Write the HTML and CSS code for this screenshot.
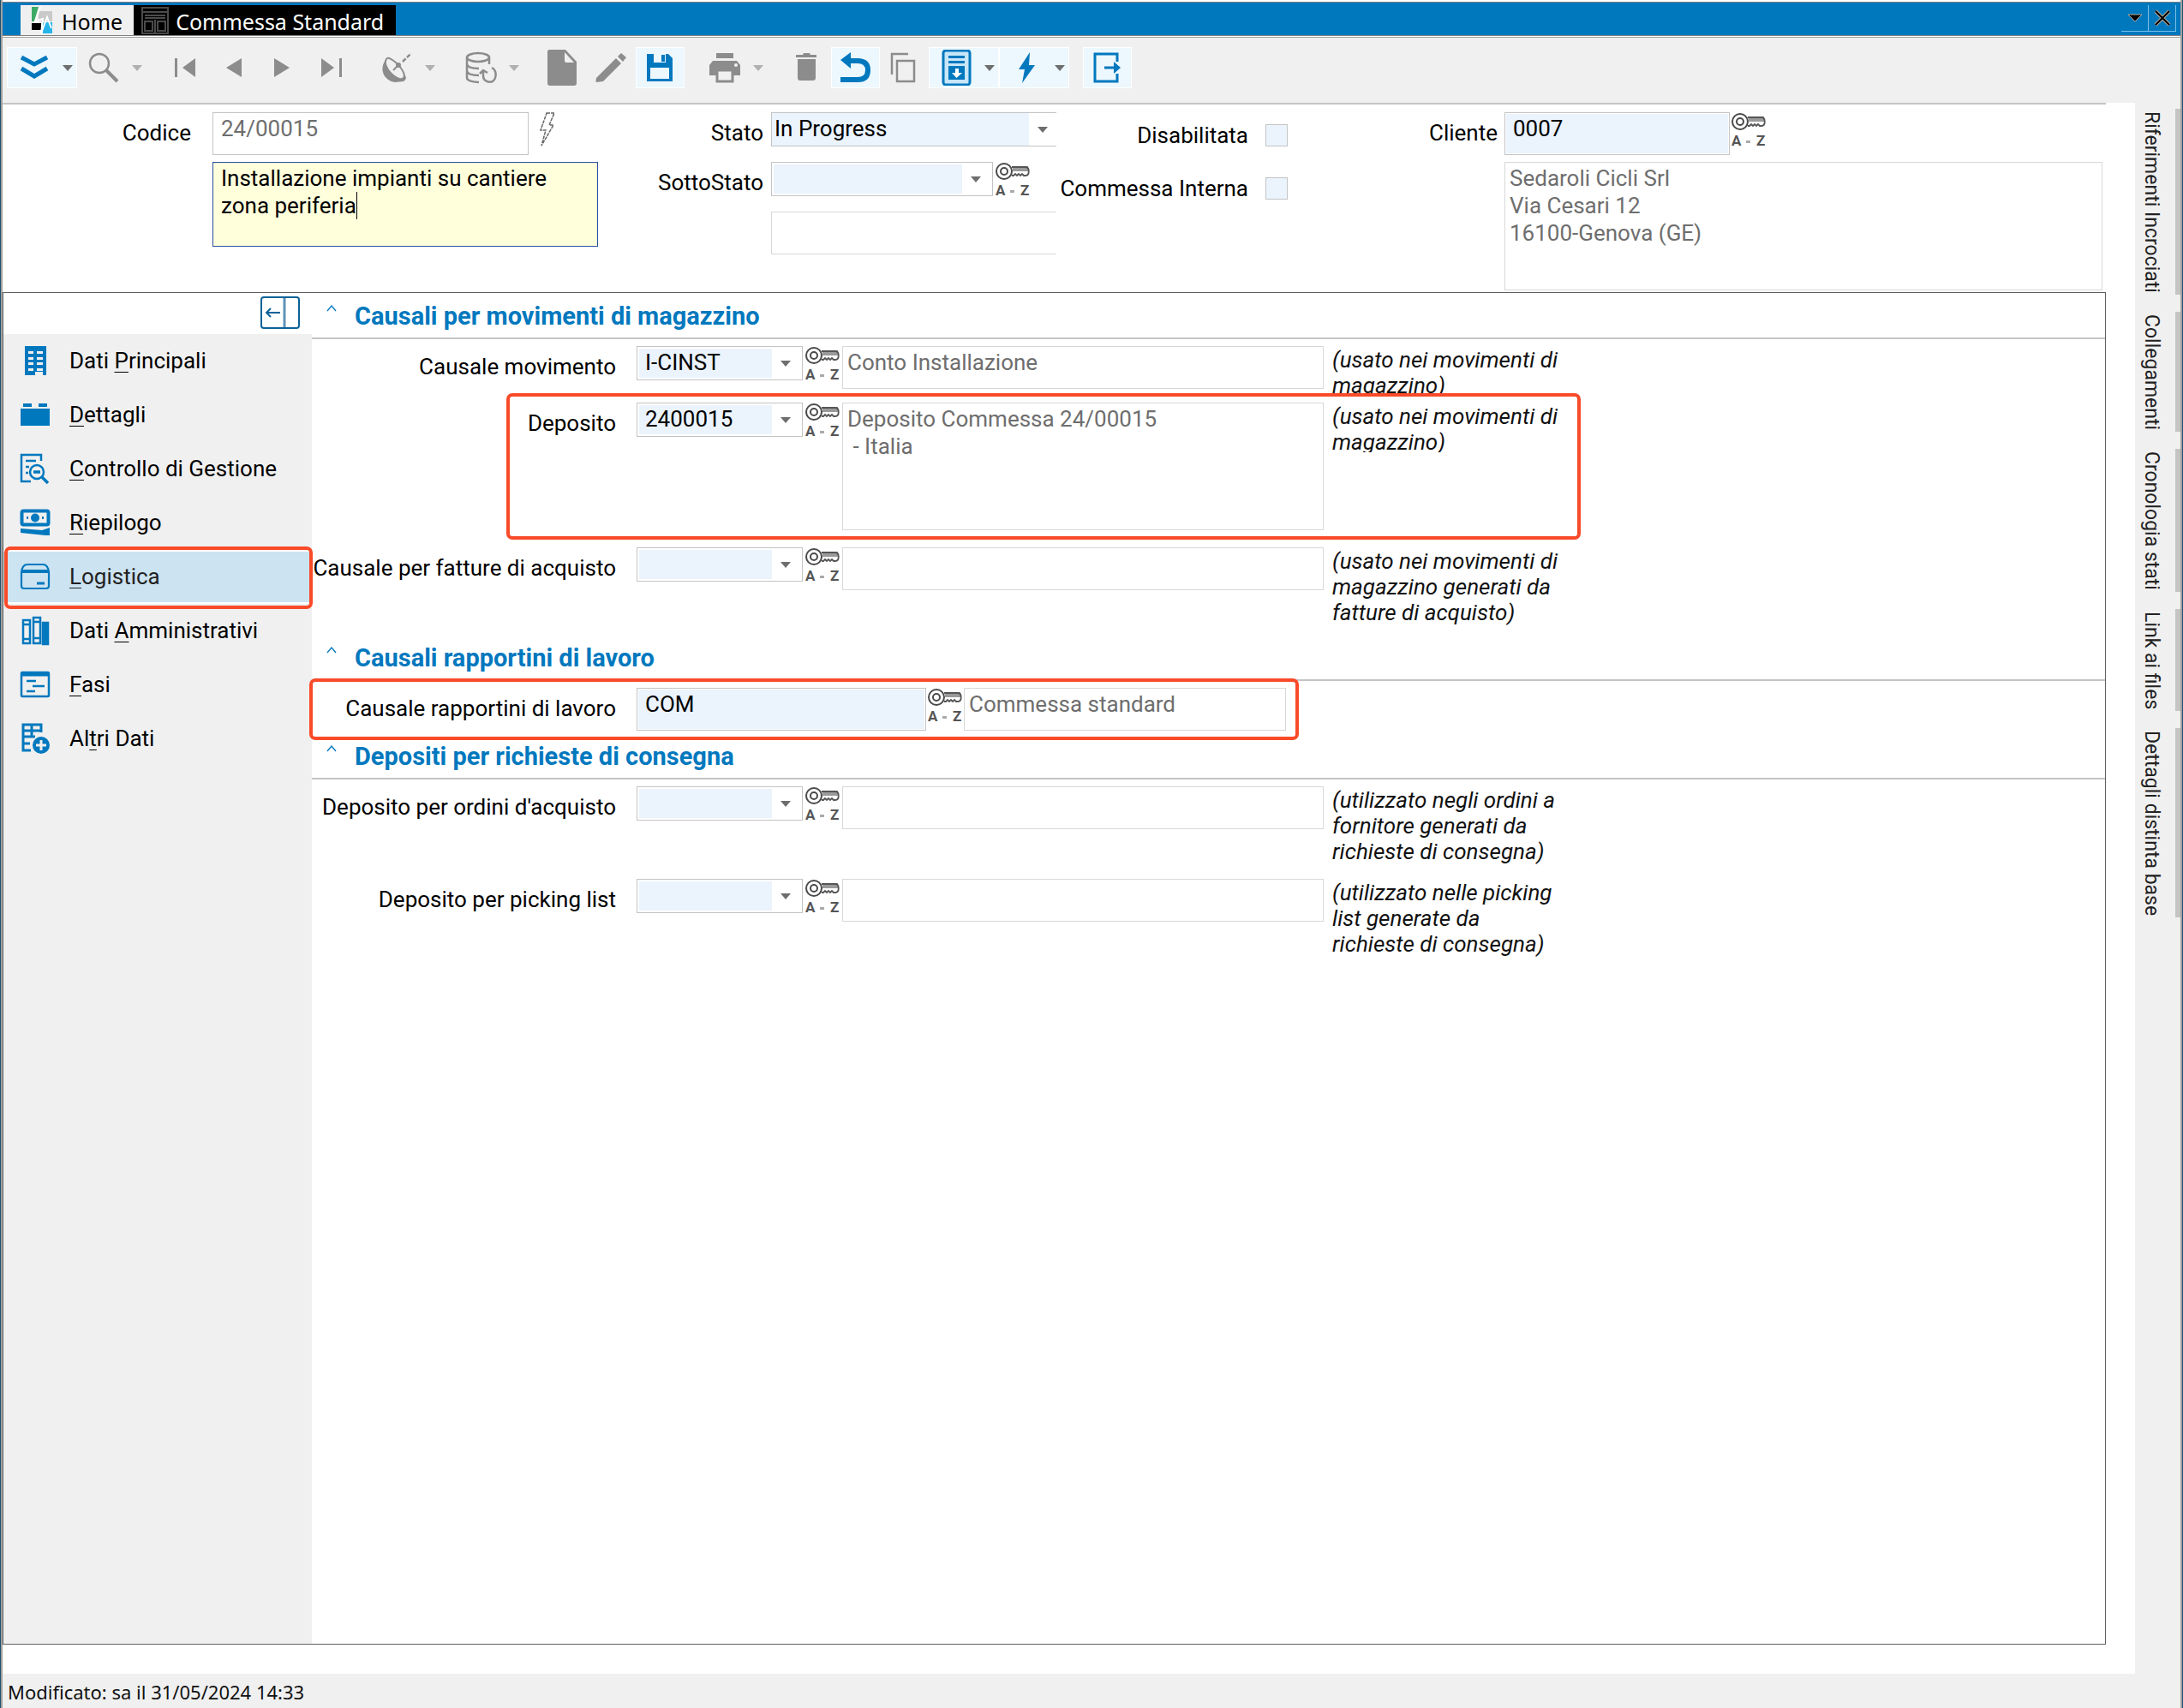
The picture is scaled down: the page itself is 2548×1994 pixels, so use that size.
FILE: index.html
```html
<!DOCTYPE html>
<html lang="it">
<head>
<meta charset="utf-8">
<title>Commessa Standard</title>
<meta name="viewport" content="width=device-width, initial-scale=1">
<link rel="stylesheet" href="styles.css">
</head>
<body>
<svg class="defs" aria-hidden="true">
  <symbol id="key" viewBox="0 0 42 40">
    <rect x="21" y="5" width="18" height="6" fill="#9a9a9a"/>
    <path d="M20 6H36C41 6 41 16 36 16H34L32 14L30 16L28 14L26 16L24 14L22 16H20" fill="none" stroke="#555" stroke-width="1.800"/>
    <circle cx="11" cy="11" r="9" fill="#fff" stroke="#4a4a4a" stroke-width="2"/>
    <circle cx="11" cy="11" r="4" fill="none" stroke="#4a4a4a" stroke-width="2"/>
    <text x="1" y="39" class="key-text">A</text><rect x="18" y="33" width="5" height="3" fill="#aaa"/><text x="30" y="39" class="key-text">Z</text>
  </symbol>
  <symbol id="arrow" viewBox="0 0 12 7"><path d="M0 0H12L6 7Z" fill="currentColor"/></symbol>
  <symbol id="up" viewBox="0 0 12 8"><path d="M1 7L6 1L11 7" fill="none" stroke="currentColor" stroke-width="1.3"/></symbol>
</svg>
<div class="window">
  <header class="titlebar">
    <nav class="tabs">
      <button class="tab" type="button">
        <svg class="tab-icon" viewBox="0 0 32 32"><path d="M5 0H13L8 17H5Z" fill="#3dab68"/><path d="M13 5H29V17H13Z" fill="#c9c9c9"/><path d="M5 19H16V27H5Z"/><path d="M18 18H29V31H18Z" fill="#26b5e8"/><path d="M15 0L9 17L18 14L16 31L23 12L28 25" fill="none" stroke="#fff" stroke-width="2"/></svg>
        <span>Home</span>
      </button>
      <button class="tab tab--active" type="button">
        <svg class="tab-icon" viewBox="0 0 32 32" fill="none" stroke="#4b4b4b" stroke-width="2"><path d="M1 1H31V31H1ZM1 6H31M4 10H28M4 13H28M4 17H13V28H4ZM19 17H28V28H19ZM16 15V30"/></svg>
        <span>Commessa Standard</span>
      </button>
    </nav>
    <div class="window-buttons">
      <button type="button" aria-label="Elenco schede"><svg width="18" height="10" viewBox="0 0 18 10"><path d="M1 1H17L9 9Z" stroke="#b9a994"/></svg></button>
      <button type="button" aria-label="Chiudi"><svg width="20" height="20" viewBox="0 0 20 20"><path d="M2 2L18 18M18 2L2 18" stroke="#b9a994" stroke-width="4"/><path d="M2 2L18 18M18 2L2 18" stroke="#000" stroke-width="2"/></svg></button>
    </div>
  </header>

  <div class="toolbar" role="toolbar" aria-label="Comandi">
    <div class="tool-group">
      <button class="tool tool--split is-on" type="button" aria-label="Espandi"><svg class="ico" viewBox="0 0 42 42" fill="none" stroke="currentColor" stroke-width="5"><path d="M6 9L21 17L36 9M6 22L21 31L36 22"/></svg><svg class="arr"><use href="#arrow"/></svg></button>
      <button class="tool tool--split" type="button" aria-label="Cerca"><svg class="ico" viewBox="0 0 42 42" fill="none" stroke="currentColor"><circle cx="16" cy="16" r="11" stroke-width="2.5"/><path d="M24 24L37 37" stroke-width="4"/></svg><svg class="arr"><use href="#arrow"/></svg></button>
    </div>
    <div class="tool-group">
      <button class="tool" type="button" aria-label="Primo"><svg class="ico" viewBox="0 0 42 42" fill="currentColor"><path d="M9 10H12V32H9ZM33 10V32L18 21Z"/></svg></button>
      <button class="tool" type="button" aria-label="Precedente"><svg class="ico" viewBox="0 0 42 42" fill="currentColor"><path d="M30 10V32L12 21Z"/></svg></button>
      <button class="tool" type="button" aria-label="Successivo"><svg class="ico" viewBox="0 0 42 42" fill="currentColor"><path d="M11 10V32L29 21Z"/></svg></button>
      <button class="tool" type="button" aria-label="Ultimo"><svg class="ico" viewBox="0 0 42 42" fill="currentColor"><path d="M30 10H33V32H30ZM9 10V32L24 21Z"/></svg></button>
    </div>
    <div class="tool-group">
      <button class="tool tool--split" type="button" aria-label="Radar"><svg class="ico" viewBox="0 0 42 42"><path d="M9 11C0 21 5 36 19 38L29 37C34 34 32 30 28 28Z" fill="currentColor"/><path d="M9 11C12 5 34 25 29 33C23 39 3 20 9 11Z" fill="#f0f0f0" stroke="currentColor" stroke-width="2"/><path d="M17 24L24 17" stroke="currentColor" stroke-width="2"/><circle cx="23" cy="18" r="3" fill="currentColor"/><path d="M28 14L38 4" stroke="currentColor" stroke-width="2.5" stroke-dasharray="5 2"/></svg><svg class="arr"><use href="#arrow"/></svg></button>
    </div>
    <div class="tool-group">
      <button class="tool tool--split" type="button" aria-label="Aggiorna dati"><svg class="ico" viewBox="0 0 42 42" fill="none" stroke="currentColor" stroke-width="2.5"><ellipse cx="18" cy="9" rx="13" ry="5"/><path d="M5 9V33C5 36 12 38 19 38M31 9V17M5 17C6 21 13 22 19 22M5 25C6 29 13 30 19 30"/><path d="M34 21C40 24 40 33 35 37C30 39 24 36 24 31V25M20 28L24 24L29 27"/></svg><svg class="arr"><use href="#arrow"/></svg></button>
    </div>
    <div class="tool-group">
      <button class="tool" type="button" aria-label="Nuovo"><svg class="ico" viewBox="0 0 42 42"><path d="M6 0H25L38 14V39Q38 42 35 42H7Q4 42 4 39V3Q4 0 6 0Z" fill="currentColor"/><path d="M24 3L35 15H26Q24 15 24 13Z" fill="#f0f0f0"/></svg></button>
      <button class="tool" type="button" aria-label="Modifica"><svg class="ico" viewBox="0 0 42 42" fill="currentColor"><path d="M27 10L33 16L12 37L4 38Q3 38 4 33ZM29 8L33 4L39 9L35 14Z"/></svg></button>
      <button class="tool is-on" type="button" aria-label="Salva"><svg class="ico" viewBox="0 0 42 42"><path d="M6 5H31L36 10V37H6Z" fill="currentColor"/><path d="M14 5H28V15H14ZM10 21H32V34H10Z" fill="#ecf7fe"/><path d="M23 6H27V14H23Z" fill="currentColor"/></svg></button>
    </div>
    <div class="tool-group">
      <button class="tool tool--split" type="button" aria-label="Stampa"><svg class="ico" viewBox="0 0 42 42"><path d="M11 4H31V10H11ZM7 13H35L39 18V30H3V18Z" fill="currentColor"/><circle cx="34" cy="18" r="2" fill="#f0f0f0"/><path d="M12 24H30V37H12Z" fill="#f0f0f0" stroke="currentColor" stroke-width="3"/></svg><svg class="arr"><use href="#arrow"/></svg></button>
    </div>
    <div class="tool-group">
      <button class="tool" type="button" aria-label="Elimina"><svg class="ico" viewBox="0 0 42 42" fill="currentColor"><path d="M9 6H17L18 4H25L26 6H33V9H9ZM11 11H32V33Q32 36 29 36H14Q11 36 11 33Z"/></svg></button>
      <button class="tool is-on" type="button" aria-label="Annulla"><svg class="ico" viewBox="0 0 42 42"><path d="M14 13H24Q36 13 36 24Q36 35 24 35H4" fill="none" stroke="currentColor" stroke-width="6"/><path d="M4 12L16 3V22Z" fill="currentColor"/></svg></button>
      <button class="tool" type="button" aria-label="Copia"><svg class="ico" viewBox="0 0 42 42" fill="none" stroke="currentColor" stroke-width="2.5"><path d="M13 13H33V37H13ZM7 29V5H26"/></svg></button>
      <button class="tool tool--split is-on" type="button" aria-label="Archivia"><svg class="ico" viewBox="0 0 42 42"><rect x="6" y="1" width="31" height="40" rx="3" fill="#c7e6f8" stroke="currentColor" stroke-width="3"/><path d="M12 7H31V10H12ZM12 13H31V16H12ZM12 19H31V35H12Z" fill="currentColor"/><path d="M20 22H24V27H28L21.500 33L16 27H20Z" fill="#fff"/></svg><svg class="arr"><use href="#arrow"/></svg></button>
      <button class="tool tool--split is-on" type="button" aria-label="Azioni"><svg class="ico" viewBox="0 0 42 42" fill="currentColor"><path d="M25 3L12 23H19L16 39L31 18H24Z"/></svg><svg class="arr"><use href="#arrow"/></svg></button>
    </div>
    <div class="tool-group">
      <button class="tool is-on" type="button" aria-label="Esci"><svg class="ico" viewBox="0 0 42 42" fill="none" stroke="currentColor" stroke-width="3"><path d="M33 14V5H7V37H33V28M18 21H33"/><path d="M29 14L37 21L29 28Z" fill="currentColor" stroke="none"/></svg></button>
    </div>
  </div>

  <div class="workspace">
    <main class="main">
      <form class="head">
        <div class="head-group head-group--code">
          <label class="label" for="codice">Codice</label>
          <div class="line">
            <input class="input" id="codice" value="24/00015" readonly>
            <svg class="auto" viewBox="0 0 20 40"><path d="M9 1H18L12 15H17L3 39L8 21H2Z" fill="none" stroke="#666" stroke-width="1.500" stroke-dasharray="4 1"/></svg>
          </div>
          <div class="descr">
            <textarea class="input input--edit" aria-label="Descrizione">Installazione impianti su cantiere
zona periferia</textarea>
            <span class="caret"></span>
          </div>
        </div>

        <div class="head-group head-group--state">
          <label class="label" for="stato">Stato</label>
          <div class="combo combo--open">
            <select id="stato"><option>In Progress</option></select>
            <svg class="arr"><use href="#arrow"/></svg>
          </div>
          <label class="label" for="sotto">SottoStato</label>
          <div class="line line--sub">
            <div class="combo combo--sub">
              <select id="sotto"><option></option></select>
              <svg class="arr"><use href="#arrow"/></svg>
            </div>
            <button class="key" type="button" aria-label="Cerca sottostato"><svg><use href="#key"/></svg></button>
          </div>
          <input class="input input--soft input--cut" aria-label="Descrizione sottostato" readonly>
        </div>

        <div class="head-group head-group--flags">
          <label class="flag-label" for="dis">Disabilitata</label><input class="check" id="dis" type="checkbox">
          <label class="flag-label" for="int">Commessa Interna</label><input class="check" id="int" type="checkbox">
        </div>

        <div class="head-group head-group--client">
          <label class="label" for="cliente">Cliente</label>
          <div class="line line--client">
            <input class="input input--fill" id="cliente" value="0007">
            <button class="key" type="button" aria-label="Cerca cliente"><svg><use href="#key"/></svg></button>
          </div>
          <textarea class="input input--soft input--address" aria-label="Indirizzo" readonly>Sedaroli Cicli Srl
Via Cesari 12
16100-Genova (GE)</textarea>
        </div>
      </form>

      <div class="panel">
        <aside class="side">
          <div class="side-top">
            <button class="collapse" type="button" aria-label="Riduci menu"><svg width="46" height="38" viewBox="0 0 46 38" fill="none" stroke="#0b6298" stroke-width="2"><rect x="1" y="1" width="44" height="36" rx="3"/><path d="M28 2V36" stroke="#5f93b8" stroke-width="3"/><path d="M7 19H23M12 14L7 19L12 24"/></svg></button>
          </div>
          <nav class="menu">
            <a class="menu-item" href="#"><svg viewBox="0 0 36 36"><path d="M6 1H31V35H27V31H18V35H6Z" fill="#0078be"/><path d="M10 7H16V10H10ZM20 7H27V10H20ZM10 14H16V17H10ZM20 14H27V17H20ZM10 20H16V23H10ZM20 20H27V23H20ZM10 27H16V30H10ZM20 27H27V30H20Z" fill="#f0f0f0"/></svg><span>Dati <u>P</u>rincipali</span></a>
            <a class="menu-item" href="#"><svg viewBox="0 0 36 36" fill="#0078be"><path d="M1 11H35V31H1ZM4 5H14V9H4ZM22 5H32V9H22Z"/></svg><span><u>D</u>ettagli</span></a>
            <a class="menu-item" href="#"><svg viewBox="0 0 36 36" fill="none" stroke="#0078be" stroke-width="2.5"><path d="M13 33H2V2H25V9M7 9H19M7 16H11M7 23H10"/><circle cx="20" cy="22" r="8"/><path d="M26 28L33 35M16 22H24" stroke-width="3.500"/></svg><span><u>C</u>ontrollo di Gestione</span></a>
            <a class="menu-item" href="#"><svg viewBox="0 0 36 36"><rect x="2.500" y="4.500" width="31" height="16" rx="2" fill="#f0f0f0" stroke="#0078be" stroke-width="4"/><ellipse cx="18" cy="12.500" rx="5" ry="5" fill="#0078be"/><path d="M8 11H10V14H8ZM26 11H28V14H26ZM1 25L26 27L35 24V33H30L1 30Z" fill="#0078be"/></svg><span><u>R</u>iepilogo</span></a>
            <a class="menu-item menu-item--current" href="#" aria-current="page"><svg viewBox="0 0 36 36" fill="none" stroke="#0078be" stroke-width="2.2"><path d="M2 13Q3 4 9 4H27Q33 4 34 13V29Q34 32 31 32H5Q2 32 2 29Z"/><path d="M2 12H34" stroke-width="4"/><path d="M20 26H29" stroke-width="3"/></svg><span><u>L</u>ogistica</span></a>
            <a class="menu-item" href="#"><svg viewBox="0 0 36 36" fill="none" stroke="#0078be" stroke-width="2.5"><path d="M4 6H12V33H4ZM4 11H12M4 28H12M16 3H24V33H16ZM16 8H24M16 27H24"/><path d="M27 9H33V34H27ZM27 14H33" fill="#0078be"/></svg><span>Dati <u>A</u>mministrativi</span></a>
            <a class="menu-item" href="#"><svg viewBox="0 0 36 36" fill="none" stroke="#0078be" stroke-width="2.5"><rect x="2" y="4" width="32" height="28" rx="1"/><path d="M2 6H34" stroke-width="5"/><path d="M8 14H19M15 20H29M8 26H18"/></svg><span><u>F</u>asi</span></a>
            <a class="menu-item" href="#"><svg viewBox="0 0 36 36" fill="none" stroke="#0078be" stroke-width="3"><path d="M13 32H4V2H25V11M4 9H25M14 2V17M4 16H18M4 24H12"/><circle cx="25" cy="26" r="10" fill="#0078be" stroke="none"/><path d="M25 20V32M19 26H31" stroke="#f0f0f0"/></svg><span>Al<u>t</u>ri Dati</span></a>
          </nav>
        </aside>

        <div class="content">
          <section>
            <h2 class="section-title"><button type="button"><svg><use href="#up"/></svg><span>Causali per movimenti di magazzino</span></button></h2>
            <div class="rows">
              <div class="row row--short">
                <label class="label" for="f1">Causale movimento</label>
                <div class="combo"><select id="f1"><option>I-CINST</option></select><svg class="arr"><use href="#arrow"/></svg></div>
                <button class="key" type="button" aria-label="Cerca causale"><svg><use href="#key"/></svg></button>
                <input class="input input--soft" value="Conto Installazione" aria-label="Descrizione causale" readonly>
                <p class="note note--cut">(usato nei movimenti di magazzino)</p>
              </div>
              <div class="row row--tall">
                <label class="label" for="f2">Deposito</label>
                <div class="combo"><select id="f2"><option>2400015</option></select><svg class="arr"><use href="#arrow"/></svg></div>
                <button class="key" type="button" aria-label="Cerca deposito"><svg><use href="#key"/></svg></button>
                <textarea class="input input--soft" aria-label="Descrizione deposito" readonly>Deposito Commessa 24/00015
 - Italia</textarea>
                <p class="note note--cut">(usato nei movimenti di magazzino)</p>
                <span class="mark mark--store"></span>
              </div>
              <div class="row row--note">
                <label class="label" for="f3">Causale per fatture di acquisto</label>
                <div class="combo"><select id="f3"><option></option></select><svg class="arr"><use href="#arrow"/></svg></div>
                <button class="key" type="button" aria-label="Cerca causale fatture"><svg><use href="#key"/></svg></button>
                <input class="input input--soft" aria-label="Descrizione causale fatture" readonly>
                <p class="note">(usato nei movimenti di magazzino generati da fatture di acquisto)</p>
              </div>
            </div>
          </section>
          <section>
            <h2 class="section-title"><button type="button"><svg><use href="#up"/></svg><span>Causali rapportini di lavoro</span></button></h2>
            <div class="rows">
              <div class="row row--report">
                <label class="label" for="f4">Causale rapportini di lavoro</label>
                <input class="input input--fill" id="f4" value="COM">
                <button class="key" type="button" aria-label="Cerca causale rapportini"><svg><use href="#key"/></svg></button>
                <input class="input input--soft" value="Commessa standard" aria-label="Descrizione causale rapportini" readonly>
                <span class="mark mark--report"></span>
              </div>
            </div>
          </section>
          <section>
            <h2 class="section-title"><button type="button"><svg><use href="#up"/></svg><span>Depositi per richieste di consegna</span></button></h2>
            <div class="rows">
              <div class="row">
                <label class="label" for="f5">Deposito per ordini d'acquisto</label>
                <div class="combo"><select id="f5"><option></option></select><svg class="arr"><use href="#arrow"/></svg></div>
                <button class="key" type="button" aria-label="Cerca deposito ordini"><svg><use href="#key"/></svg></button>
                <input class="input input--soft" aria-label="Descrizione deposito ordini" readonly>
                <p class="note">(utilizzato negli ordini a fornitore generati da richieste di consegna)</p>
              </div>
              <div class="row">
                <label class="label" for="f6">Deposito per picking list</label>
                <div class="combo"><select id="f6"><option></option></select><svg class="arr"><use href="#arrow"/></svg></div>
                <button class="key" type="button" aria-label="Cerca deposito picking"><svg><use href="#key"/></svg></button>
                <input class="input input--soft" aria-label="Descrizione deposito picking" readonly>
                <p class="note">(utilizzato nelle picking list generate da richieste di consegna)</p>
              </div>
            </div>
          </section>
        </div>
      </div>
    </main>
    <nav class="docks" aria-label="Pannelli">
      <button type="button">Riferimenti Incrociati</button>
      <button type="button">Collegamenti</button>
      <button type="button">Cronologia stati</button>
      <button type="button">Link ai files</button>
      <button type="button">Dettagli distinta base</button>
    </nav>
  </div>
  <footer class="status">Modificato: sa il 31/05/2024 14:33</footer>
</div>
</body>
</html>
```

FILE: styles.css
```css
:root {
  --blue: #0078be;
  --face: #f0f0f0;
  --field: #ebf3fc;
  --line: #c4c4c4;
  --soft: #d8d8d8;
  --red: #f94a29;
}

* { box-sizing: border-box; }

body {
  margin: 0;
  background: #fff;
  color: #000;
  font: 26px/32px Roboto, sans-serif;
}

button, input, select, textarea { font: inherit; color: inherit; margin: 0; }
button { padding: 0; border: 0; background: none; }
svg { display: block; flex: none; }
.defs { display: none; }

.window {
  display: flex;
  flex-direction: column;
  min-height: 100vh;
  padding: 2px 2px 0;
  border: solid #1f5373;
  border-width: 0 1px;
  background: linear-gradient(90deg, #a0a0a0 2px, #fff 2px, #fff calc(100% - 2px), #a0a0a0 calc(100% - 2px));
}

/* Title bar */
.titlebar {
  display: flex;
  justify-content: space-between;
  height: 40px;
  padding: 3px 5px 0 21px;
  border: solid #808080;
  border-width: 1px 0;
  background: var(--blue);
  font: 25px/38px "Noto Sans", sans-serif;
}
.tabs { display: flex; }
.tab { display: flex; gap: 8px; height: 35px; padding: 0 13px 0 8px; background: var(--face); }
.tab--active { padding: 0 14px 0 9px; background: #000; color: #fff; }
.tab-icon { width: 32px; height: 32px; margin-top: 2px; }
.window-buttons { display: flex; margin-bottom: 4px; border-bottom: 1px solid #7cc0ea; }
.window-buttons button { display: grid; place-items: center; width: 32px; border-right: 1px solid #7cc0ea; }

/* Toolbar */
.toolbar {
  display: flex;
  gap: 16px;
  height: 77px;
  margin-top: 1px;
  padding: 11px 5px 0;
  border-top: 1px solid #a0a0a0;
  background: var(--face);
}
.tool-group { display: flex; }
.tool { display: flex; align-items: center; width: 57px; height: 48px; padding-left: 7px; color: #8c8c8c; }
.tool--split { gap: 12px; width: 82px; padding-left: 10px; }
.tool.is-on { padding-left: 6px; border: 1px solid #fff; background: #ecf7fe; color: var(--blue); }
.tool--split.is-on { padding-left: 10px; }
.ico { width: 42px; height: 42px; }
.arr { width: 12px; height: 7px; color: #6e6e6e; }
.tool .arr { color: #b0b0b0; }
.tool.is-on .arr { color: #6e6e6e; }

/* Workspace */
.workspace { display: flex; flex: 1; }
.main {
  display: flex;
  flex: 1;
  flex-direction: column;
  min-width: 0;
  margin: 0 34px 34px 0;
  border-top: 2px solid var(--line);
}

/* Fields */
.label { padding-top: 8px; text-align: right; white-space: nowrap; }
.line { display: flex; }
.input {
  display: block;
  min-width: 0;
  height: 50px;
  padding: 2px 9px 14px;
  border: 1px solid var(--line);
  border-radius: 0;
  background: #fff;
  color: #6e6e6e;
  outline: 0;
  resize: none;
}
textarea.input { padding-bottom: 0; overflow: hidden; }
.input--soft { padding-left: 5px; border-color: var(--soft); }
.input--fill { background: var(--field); box-shadow: inset 0 0 0 1px #fff; color: #000; }
.input--edit { width: 450px; height: 99px; border-color: #2850a0; background: #ffffdc; color: #000; }

.combo { display: grid; flex: none; align-items: center; width: 194px; height: 40px; }
.combo select {
  grid-area: 1 / 1;
  width: 100%;
  height: 100%;
  padding: 0 40px 2px 9px;
  border: 1px solid var(--line);
  border-radius: 0;
  background: linear-gradient(var(--field), var(--field)) 2px 2px / calc(100% - 37px) calc(100% - 4px) no-repeat #fff;
  color: #000;
  appearance: none;
}
.combo .arr { grid-area: 1 / 1; justify-self: end; margin-right: 14px; pointer-events: none; }

.key { flex: none; width: 42px; height: 40px; }
.key svg { width: 42px; height: 40px; }
.key-text { font: bold 17px Roboto, sans-serif; fill: #555; }

/* Header form */
.head { display: flex; height: 219px; padding: 9px 4px 0 0; }
.head-group { display: grid; align-content: start; row-gap: 8px; }
.head-group--code { grid-template-columns: 220px 452px; column-gap: 25px; }
.head-group--code .input:not(.input--edit) { width: 369px; }
.auto { width: 20px; height: 40px; margin-left: 12px; }
.descr { position: relative; grid-column: 2; }
.caret { position: absolute; top: 35px; left: 168px; width: 1px; height: 32px; background: #000; }

.head-group--state { grid-template-columns: 191px 333px; column-gap: 9px; row-gap: 18px; }
.combo--open { width: 333px; }
.combo--open select { padding-left: 3px; border-right: 0; background-position: 0 0; background-size: calc(100% - 32px) 100%; }
.combo--open .arr { margin-right: 10px; }
.combo--sub { width: 259px; }
.line--sub { gap: 2px; }
.input--cut { grid-column: 2; border-right: 0; }

.head-group--flags { grid-template-columns: 224px 26px; column-gap: 20px; row-gap: 30px; padding-top: 11px; }
.flag-label { height: 32px; text-align: right; white-space: nowrap; }
.check { width: 26px; height: 26px; margin: 3px 0; border: 1px solid var(--line); background: var(--field); appearance: none; }

.head-group--client { flex: 1; grid-template-columns: 245px 1fr; column-gap: 8px; }
.line--client { gap: 1px; }
.line--client .input { width: 263px; }
.input--address { grid-column: 2; width: 100%; height: 150px; }

/* Panel */
.panel { display: flex; flex: 1; border: 1px solid #606060; }
.side { display: flex; flex: none; flex-direction: column; width: 360px; }
.side-top { display: flex; align-items: flex-start; justify-content: flex-end; height: 48px; padding: 4px 14px 0; }
.menu { flex: 1; background: var(--face); }
.menu-item {
  position: relative;
  display: flex;
  align-items: center;
  gap: 22px;
  height: 63px;
  padding: 0 0 2px 19px;
  color: #000;
  text-decoration: none;
  white-space: nowrap;
}
.menu-item svg { width: 36px; height: 36px; }
.menu-item u { text-decoration-thickness: 1px; text-underline-offset: 4px; }
.menu-item--current { border: solid #fff; border-width: 2px 0; background: #cce3f1; color: #222; }
.menu-item--current::after, .mark {
  content: "";
  position: absolute;
  border: 4px solid var(--red);
  border-radius: 7px;
  pointer-events: none;
}
.menu-item--current::after { inset: -6px -1px -8px 1px; }

.content { flex: 1; min-width: 0; }
.section-title { height: 54px; margin: 0; border-bottom: 2px solid var(--line); }
.section-title button {
  display: flex;
  gap: 21px;
  padding: 10px 0 0 17px;
  color: var(--blue);
  font: 700 29px/34px Roboto, sans-serif;
}
.section-title svg { width: 12px; height: 8px; margin-top: 4px; }
.rows { padding-top: 8px; }
.row { position: relative; display: flex; align-items: flex-start; height: 108px; }
.row--short { height: 66px; }
.row--tall { height: 169px; }
.row--note { height: 102px; }
.row--report { height: 53px; }
.row .label { flex: none; width: 355px; margin-right: 24px; }
.row .key { margin: 0 2px; }
.row .input--soft { width: 562px; }
.row .input--fill { width: 338px; }
.row--tall .input--soft { height: 149px; }
.row--report .key { margin: 0 1px; }
.row--report .input--soft { width: 376px; }
.note { width: 274px; margin: 1px 0 0 10px; color: #111; font-style: italic; line-height: 30px; }
.note--cut { height: 57px; overflow: hidden; }
.mark--store { top: -11px; left: 227px; width: 1254px; height: 171px; }
.mark--report { top: -11px; left: -3px; width: 1155px; height: 72px; z-index: 1; }

/* Side docks */
.docks { display: flex; flex-direction: column; gap: 20px; width: 53px; padding-top: 7px; background: var(--face); }
.docks button {
  width: 53px;
  padding: 3px 9px 2px 0;
  border-right: 6px solid var(--line);
  color: #222;
  font-size: 23px;
  line-height: 38px;
  text-align: left;
  white-space: nowrap;
  writing-mode: vertical-rl;
}

.status { height: 40px; padding: 5px 6px; background: var(--face); color: #111; font: 22px/32px "Noto Sans", sans-serif; }
```
